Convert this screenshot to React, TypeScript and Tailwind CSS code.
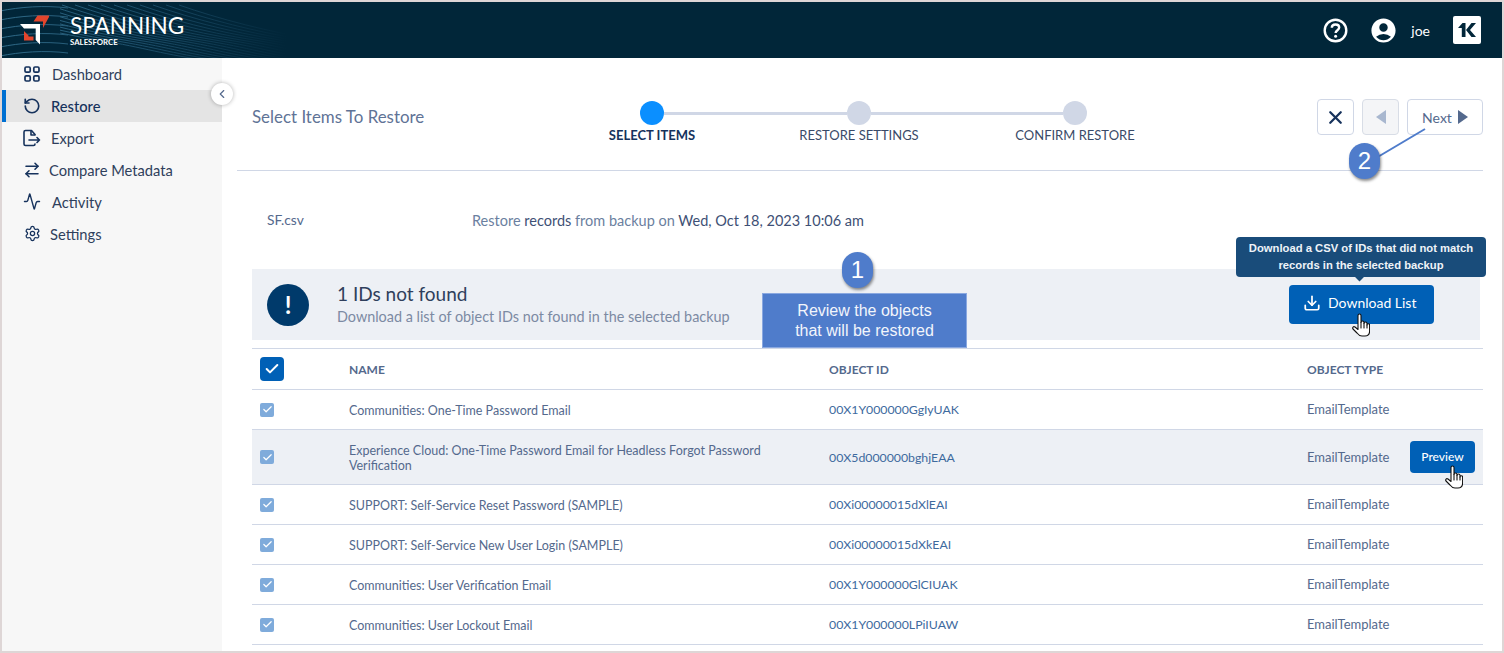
import React from "react";
import { RotateCcw, ArrowRightLeft, Activity, Settings, Download, X, ChevronLeft, Check } from "lucide-react";
import { MdAccountCircle } from "react-icons/md";

const font = { fontFamily: '"Lato", "Noto Sans", sans-serif' };
const arial = { fontFamily: '"Liberation Sans", sans-serif' };

function Waves() {
  const left: string[] = [];
  for (let i = 0; i < 6; i++) {
    const y = 9 + i * 9;
    left.push(`M-2 ${y} C 18 ${y - 4}, 42 ${y - 6}, 66 ${y - 3}`);
  }
  const right: string[] = [];
  for (let i = -8; i < 10; i++) {
    const x = 60 + i * 13;
    right.push(`M${x} 3 C ${x + 40} 17, ${x + 90} 30, ${x + 140} 38 S ${x + 200} 52, ${x + 260} 60`);
  }
  return (
    <svg className="absolute left-0 top-0 h-full w-[400px]" viewBox="0 0 400 56" fill="none">
      <defs>
        <linearGradient id="wv" gradientUnits="userSpaceOnUse" x1="0" x2="285" y1="0" y2="0">
          <stop offset="0" stopColor="#2f6a88" />
          <stop offset="0.5" stopColor="#1c4d68" />
          <stop offset="1" stopColor="#012639" />
        </linearGradient>
        <clipPath id="wc">
          <rect x="58" y="0" width="340" height="56" />
        </clipPath>
      </defs>
      {left.map((d, i) => (
        <path key={i} d={d} stroke="url(#wv)" strokeWidth="1" />
      ))}
      <g clipPath="url(#wc)">
        {right.map((d, i) => (
          <path key={i} d={d} stroke="url(#wv)" strokeWidth="1" />
        ))}
      </g>
    </svg>
  );
}

function Logo() {
  return (
    <svg width="31" height="31" viewBox="0 0 31 31" className="shrink-0">
      <path d="M0 9 L20 9 L20 29.5 L15.7 25 L15.7 13.5 L4 13.5 Z" fill="#fff" />
      <path d="M17.5 0.5 L29 0.5 L29 2 L23 13 L23 6.5 L13.5 6.5 Z" fill="#e2452c" />
      <path d="M4 16 L8.5 20.5 L8.5 21.5 L13.5 21.5 L13.5 25.5 L4 25.5 Z" fill="#e2452c" />
    </svg>
  );
}

function ExportIcon() {
  return (
    <svg width="18" height="18" viewBox="0 0 18 18" fill="none" stroke="#16325c" strokeWidth="1.6" strokeLinecap="round" strokeLinejoin="round">
      <path d="M12 5.5 L8.5 1.5 H2.5 Q1 1.5 1 3 V15 Q1 16.5 2.5 16.5 H10.5 Q12 16.5 12 15" />
      <path d="M8 2 V6 H12" />
      <path d="M6 11 H16.5 M14 8.5 L16.5 11 L14 13.5" />
    </svg>
  );
}

function DashIcon() {
  return (
    <svg width="16" height="16" viewBox="0 0 16 16" fill="none" stroke="#16325c" strokeWidth="1.7">
      <rect x="1" y="1" width="5.2" height="5.2" rx="1.2" />
      <rect x="9.8" y="1" width="5.2" height="5.2" rx="1.2" />
      <rect x="1" y="9.8" width="5.2" height="5.2" rx="1.2" />
      <rect x="9.8" y="9.8" width="5.2" height="5.2" rx="1.2" />
    </svg>
  );
}

function Hand({ className }: { className: string }) {
  return (
    <svg className={className} width="18" height="24" viewBox="0 0 18 24" fill="#fff" stroke="#111" strokeWidth="1.1" strokeLinejoin="round" strokeLinecap="round">
      <path d="M6 15 V2.5 a1.5 1.5 0 0 1 3 0 V9.5 a1.5 1.5 0 0 1 3 0 V10.5 a1.5 1.5 0 0 1 3 0 V12 a1.3 1.3 0 0 1 2.6 0 V18 C17.6 21 16 23 13 23 H10 C7.5 23 6.5 22 5 20 L1 16 C0 14.5 1.5 13 3 14 L6 16.5 Z" />
      <path d="M9 9.5 V15 M12 10.5 V15 M15 12 V15" fill="none" />
    </svg>
  );
}

const nav: { label: string; icon: React.ReactNode; gap: string; active?: boolean }[] = [
  { label: "Dashboard", icon: <DashIcon />, gap: "gap-[11px]" },
  { label: "Restore", icon: <RotateCcw size={18} color="#16325c" strokeWidth={2.2} />, gap: "gap-[10px]", active: true },
  { label: "Export", icon: <ExportIcon />, gap: "gap-[10px]" },
  { label: "Compare Metadata", icon: <ArrowRightLeft size={18} color="#16325c" strokeWidth={2.1} />, gap: "gap-[8px]" },
  { label: "Activity", icon: <Activity size={19} color="#16325c" strokeWidth={1.9} />, gap: "gap-[11px]" },
  { label: "Settings", icon: <Settings size={17} color="#16325c" strokeWidth={1.8} />, gap: "gap-[9px]" },
];

const rows = [
  ["Communities: One-Time Password Email", "00X1Y000000GgIyUAK"],
  ["Experience Cloud: One-Time Password Email for Headless Forgot Password Verification", "00X5d000000bghjEAA"],
  ["SUPPORT: Self-Service Reset Password (SAMPLE)", "00Xi00000015dXlEAI"],
  ["SUPPORT: Self-Service New User Login (SAMPLE)", "00Xi00000015dXkEAI"],
  ["Communities: User Verification Email", "00X1Y000000GlCIUAK"],
  ["Communities: User Lockout Email", "00X1Y000000LPiIUAW"],
];

function Step({ label, width, first, last, active }: { label: string; width: string; first?: boolean; last?: boolean; active?: boolean }) {
  return (
    <div className={`flex flex-col items-center ${width}`}>
      <div className="flex w-full items-center">
        <div className={`h-[3px] flex-1 ${first ? "" : "bg-[#d0d7e6]"}`} />
        <div className={`h-6 w-6 rounded-full ${active ? "bg-[#0b8fff]" : "bg-[#d0d7e6]"}`} />
        <div className={`h-[3px] flex-1 ${last ? "" : "bg-[#d0d7e6]"}`} />
      </div>
      <div className={`text-[13px] leading-5 ${active ? "font-bold text-[#16325c]" : "text-[#3a4a68]"}`}>{label}</div>
    </div>
  );
}

export default function App() {
  return (
    <div className="relative h-[653px] w-[1504px] overflow-hidden border-[2px] border-[#ded6d6] bg-white" style={font}>
      <header className="relative flex h-[56px] items-center overflow-hidden bg-[#012639]">
        <Waves />
        <div className="relative ml-[18px] flex items-center">
          <Logo />
          <div className="ml-[19px] flex flex-col">
            <span className="text-[22.5px] leading-[24px] text-white">SPANNING</span>
            <span className="text-[7.8px] font-bold leading-[8px] text-white">SALESFORCE</span>
          </div>
        </div>
        <div className="relative ml-auto mr-[21px] flex items-center">
          <svg width="25" height="25" viewBox="0 0 25 25" fill="none" stroke="#fff">
            <circle cx="12.5" cy="12.5" r="10.8" strokeWidth="2.4" />
            <path d="M8.8 9.8 C8.8 7.6 10.5 6.5 12.5 6.5 C14.6 6.5 16.2 7.7 16.2 9.6 C16.2 12.2 12.6 12.2 12.6 15" strokeWidth="2.4" />
            <circle cx="12.6" cy="18.3" r="1.5" fill="#fff" stroke="none" />
          </svg>
          <MdAccountCircle size={29} color="#fff" className="ml-[21px]" />
          <span className="ml-[13px] text-[14px] text-white">joe</span>
          <div className="ml-[23px] flex h-[28px] w-[28px] items-center justify-center rounded-[2px] bg-white">
            <svg width="18" height="14" viewBox="0 0 18 14" fill="#012639">
              <path d="M0 5 L4.5 0 H7.5 V14 H3.8 V5 Z" />
              <path d="M8 7 L13.5 0 H18 L12 7 L18 14 H13.5 Z" />
            </svg>
          </div>
        </div>
      </header>

      <div className="flex h-[593px]">
        <aside className="relative w-[220px] shrink-0 bg-[#f7f7f7]">
          {nav.map((n) => (
            <div key={n.label} className={`flex h-8 items-center border-l-[4px] pl-[17px] ${n.active ? "border-[#0070d2] bg-[#e4e4e4]" : "border-transparent"}`}>
              <div className={`flex items-center ${n.gap}`}>
                <span className="flex w-[18px] justify-center">{n.icon}</span>
                <span className={`text-[14.7px] ${n.active ? "font-medium text-[#16325c]" : "text-[#2f3f5c]"}`}>{n.label}</span>
              </div>
            </div>
          ))}
          <div className="absolute right-[-11px] top-[25px] flex h-[22px] w-[22px] items-center justify-center rounded-full bg-white shadow-[0_0_4px_rgba(0,0,0,0.3)]">
            <ChevronLeft size={14} color="#54698d" />
          </div>
        </aside>

        <main className="relative min-w-0 flex-1">
          <div className="ml-[15px] mr-[19px] flex h-[113px] items-start border-b border-[#d0d7e6] pt-[41px]">
            <div className="mt-2 w-[312px] pl-[15px] text-[16.9px] leading-5 text-[#5f7396]">Select Items To Restore</div>
            <div className="mt-[2px] flex">
              <Step label="SELECT ITEMS" width="w-[206px]" first active />
              <Step label="RESTORE SETTINGS" width="w-[208px]" />
              <Step label="CONFIRM RESTORE" width="w-[224px]" last />
            </div>
            <div className="ml-auto flex gap-2">
              <button className="flex h-9 w-[37px] items-center justify-center rounded border border-[#d0d7e6]">
                <X size={21} color="#16325c" strokeWidth={2.6} />
              </button>
              <button className="flex h-9 w-[37px] items-center justify-center rounded border border-[#d8dde6] bg-[#f4f5f7]">
                <svg width="10" height="14" viewBox="0 0 10 14" fill="#a8b7cf"><path d="M10 0 V14 L0 7 Z" /></svg>
              </button>
              <button className="flex h-9 w-[76px] items-center justify-center gap-[6px] rounded border border-[#d0d7e6] text-[14px] text-[#54698d]">
                Next
                <svg width="10" height="14" viewBox="0 0 10 14" fill="#54698d"><path d="M0 0 V14 L10 7 Z" /></svg>
              </button>
            </div>
          </div>

          <div className="ml-[30px] mr-[19px]">
            <div className="flex h-[98px] items-center pt-px text-[14.5px] text-[#6b7fa0]">
              <span className="ml-[15px] w-[205px] text-[13.8px] text-[#54698d]">SF.csv</span>
              <span>
                Restore <span className="text-[#3e5075]">records</span> from backup on <span className="text-[#3e5075]">Wed, Oct 18, 2023 10:06 am</span>
              </span>
            </div>

            <div className="mr-[3px] flex h-[71px] items-center bg-[#edf0f5] pl-[15px] pr-[46px]">
              <div className="flex h-[42px] w-[42px] items-center justify-center rounded-full bg-[#003a6b] text-[24px] font-bold text-white">!</div>
              <div className="ml-[28px]">
                <div className="text-[19px] leading-[24px] text-[#2f3f5c]">1 IDs not found</div>
                <div className="mt-px text-[14.4px] leading-[20px] text-[#7c8aa3]">Download a list of object IDs not found in the selected backup</div>
              </div>
              <button className="ml-auto flex h-[39px] w-[145px] items-center gap-[7px] rounded bg-[#0060b6] pb-1 pl-[14px] text-[14px] text-white">
                <Download size={18} strokeWidth={2.3} />
                Download List
              </button>
            </div>

            <div className="mt-2 border-t border-[#d0d7e6]">
              <div className="grid h-[41px] grid-cols-[97px_480px_478px_1fr] items-center border-b border-[#d0d7e6] text-[12px] font-bold text-[#54698d]">
                <div className="pl-2">
                  <div className="flex h-6 w-6 items-center justify-center rounded bg-[#0060b6]">
                    <Check size={16} color="#fff" strokeWidth={3} />
                  </div>
                </div>
                <div className="pt-px">NAME</div>
                <div className="pt-px">OBJECT ID</div>
                <div className="pt-px">OBJECT TYPE</div>
              </div>
              {rows.map((r, i) => (
                <div key={r[1]} className={`grid grid-cols-[97px_480px_478px_1fr] items-center border-b border-[#d0d7e6] text-[12.5px] leading-[15px] text-[#54698d] ${i === 1 ? "h-[55px] bg-[#edf0f5]" : "h-10"}`}>
                  <div className="pl-2">
                    <div className="flex h-[14px] w-[14px] items-center justify-center rounded-[2px] bg-[#7fabdb]">
                      <Check size={11} color="#fff" strokeWidth={2.6} />
                    </div>
                  </div>
                  <div className="pr-[60px] pt-px">{r[0]}</div>
                  <div className="text-[12.3px] text-[#3e6a9e]">{r[1]}</div>
                  <div className="flex items-center justify-between pr-2 text-[13px]">
                    <span>EmailTemplate</span>
                    {i === 1 && <button className="h-8 w-[65px] rounded bg-[#0060b6] pb-[2px] text-[12px] font-medium text-white">Preview</button>}
                  </div>
                </div>
              ))}
            </div>
          </div>
        </main>
      </div>

      {/* annotations */}
      <Hand className="absolute left-[1350px] top-[311px]" />
      <Hand className="absolute left-[1443px] top-[463px]" />
      <div className="absolute left-[1234px] top-[235px] flex h-[40px] w-[250px] items-center justify-center rounded bg-[#194c7a] text-center text-[11.25px] font-bold leading-[17px] text-[#eef3f8]" style={arial}>
        <span>Download a CSV of IDs that did not match<br />records in the selected backup</span>
        <span className="absolute left-[120px] top-[36px] h-[7px] w-[7px] rotate-45 bg-[#194c7a]" />
      </div>
      <div className="absolute left-[760px] top-[291px] flex h-[55px] w-[205px] items-center justify-center border border-[#8aa8e0] bg-[#4f7ccb] text-center text-[16px] leading-[20px] text-[#f2f5fb]" style={arial}>
        <span>Review the objects<br />that will be restored</span>
      </div>
      <div className="absolute left-[840px] top-[250px] flex h-[36px] w-[31px] items-center justify-center rounded-full bg-[#4f7ccb] text-[24px] text-white shadow-[1px_2px_3px_rgba(0,0,0,0.45)]" style={arial}>1</div>
      <svg className="absolute left-[1360px] top-[120px]" width="70" height="40" viewBox="0 0 70 40" fill="none">
        <path d="M63 7 L14 36" stroke="#4f7ccb" strokeWidth="2" />
      </svg>
      <div className="absolute left-[1347px] top-[141px] flex h-[36px] w-[31px] items-center justify-center rounded-full bg-[#4f7ccb] text-[24px] text-white shadow-[1px_2px_3px_rgba(0,0,0,0.45)]" style={arial}>2</div>
    </div>
  );
}
